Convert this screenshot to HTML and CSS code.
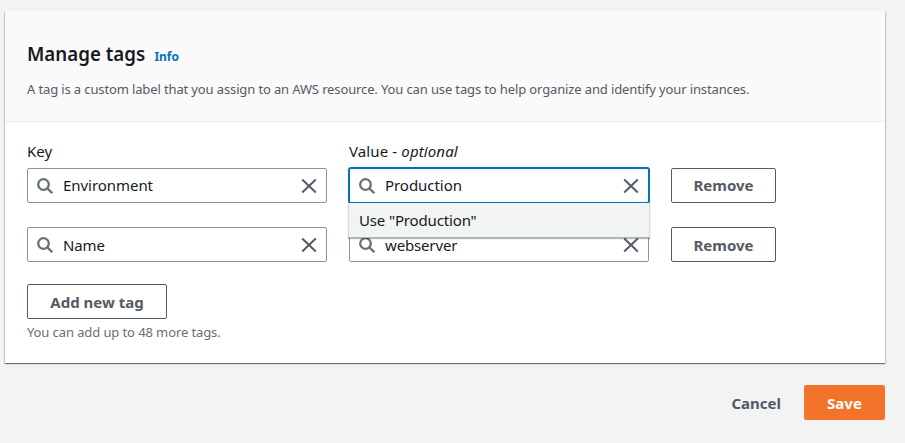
FILE: index.html
```html
<!DOCTYPE html>
<html lang="en">
<head>
<meta charset="utf-8">
<title>Manage tags</title>
<link rel="stylesheet" href="styles.css">
</head>
<body>
<svg class="sprite" width="0" height="0">
  <symbol id="search" viewBox="0 0 16 16"><circle cx="6.5" cy="6.5" r="5.3"/><path d="M10.3 10.3L15.2 15.2"/></symbol>
  <symbol id="close" viewBox="0 0 16 16"><path d="M1.2 1.5l13.6 13M14.8 1.5l-13.6 13"/></symbol>
</svg>
<main class="panel">
  <header class="panel-header">
    <div class="title-row"><h1>Manage tags</h1><a class="info">Info</a></div>
    <p class="description">A tag is a custom label that you assign to an AWS resource. You can use tags to help organize and identify your instances.</p>
  </header>
  <section class="content">
    <div class="tag-row labels"><label>Key</label><label class="value-label">Value - <em>optional</em></label></div>
    <div class="tag-row first">
      <div class="field"><svg class="search"><use href="#search"/></svg><span class="value">Environment</span><svg class="close"><use href="#close"/></svg></div>
      <div class="field focused"><svg class="search"><use href="#search"/></svg><span class="value">Production</span><svg class="close"><use href="#close"/></svg><div class="menu">Use "Production"</div></div>
      <button class="btn">Remove</button>
    </div>
    <div class="tag-row second">
      <div class="field"><svg class="search"><use href="#search"/></svg><span class="value">Name</span><svg class="close"><use href="#close"/></svg></div>
      <div class="field"><svg class="search"><use href="#search"/></svg><span class="value">webserver</span><svg class="close"><use href="#close"/></svg></div>
      <button class="btn">Remove</button>
    </div>
    <button class="btn add">Add new tag</button>
    <p class="hint">You can add up to 48 more tags.</p>
  </section>
</main>
<footer class="actions"><button class="cancel">Cancel</button><button class="save">Save</button></footer>
</body>
</html>
```
FILE: styles.css
```css
* { box-sizing: border-box; }
body { margin: 0; height: 443px; overflow: hidden; padding: 11px 20px 0 5px; background: #f2f3f3; color: #16191f; font: 15px/22px "Noto Sans", sans-serif; }
.sprite { position: absolute; }
.panel { height: 352px; background: #fff; box-shadow: 0 1px 1px rgba(0,28,36,.3), 1px 1px 1px rgba(0,28,36,.15), -1px 1px 1px rgba(0,28,36,.15), 0 1px 0 rgba(0,28,36,.15); }
.panel-header { height: 111px; padding: 31px 22px 0; background: #fafafa; border-bottom: 1px solid #eaeded; }
.title-row { display: flex; align-items: baseline; gap: 9px; height: 24px; }
h1 { margin: 0 -8px 0 0; font-size: 20px; line-height: 24px; font-weight: 600; transform: scaleX(.935); transform-origin: left; }
.info { color: #0073bb; font-size: 12px; font-weight: 700; }
.description { margin: 13px 0 0; font-size: 13px; line-height: 20px; color: #545b64; white-space: nowrap; letter-spacing: -.128px; }
.content { padding: 18px 22px 0; }
.tag-row { display: grid; grid-template-columns: 300px 300px 105px; column-gap: 22px; height: 35px; }
.labels { height: 28px; }
.value-label { letter-spacing: .12px; }
.second { margin-top: 24px; }
.field { position: relative; display: flex; align-items: center; padding: 0 9px; border: 1px solid #879596; border-radius: 2px; background: #fff; }
.focused { border-color: #0073bb; box-shadow: 0 0 0 1px #0073bb; }
svg.search, svg.close { width: 16px; height: 16px; fill: none; stroke: #545b64; stroke-width: 2; }
svg.search { stroke: #687078; stroke-width: 2.3; }
.value { flex: 1; padding-left: 10px; letter-spacing: -.05px; }
.second .value { letter-spacing: -.15px; }
.first .value { padding-bottom: 2px; }
.menu { position: absolute; z-index: 2; top: 34px; left: -2px; width: 302px; height: 35px; padding: 7px 10px; background: #f2f3f3; border: 1px solid #d5dbdb; border-top: 0; border-bottom-color: #aab7b8; box-shadow: 0 1px 1px rgba(0,28,36,.3); line-height: 21px; letter-spacing: -.15px; }
button { padding: 0; border: 0; border-radius: 2px; font: 700 15px/20px "Noto Sans", sans-serif; letter-spacing: 0; }
.btn { height: 35px; background: #fff; border: 1px solid #545b64; color: #545b64; }
.first .btn { padding-bottom: 2px; }
.add { display: block; width: 140px; margin-top: 22px; }
.hint { margin: 3px 0 0; font-size: 13px; line-height: 20px; color: #687078; letter-spacing: -.1px; }
.actions { display: flex; justify-content: flex-end; margin-top: 22px; gap: 23px; }
.cancel { background: none; color: #545b64; }
.save { width: 81px; height: 35px; background: #f2742a; color: #fff; }
```
